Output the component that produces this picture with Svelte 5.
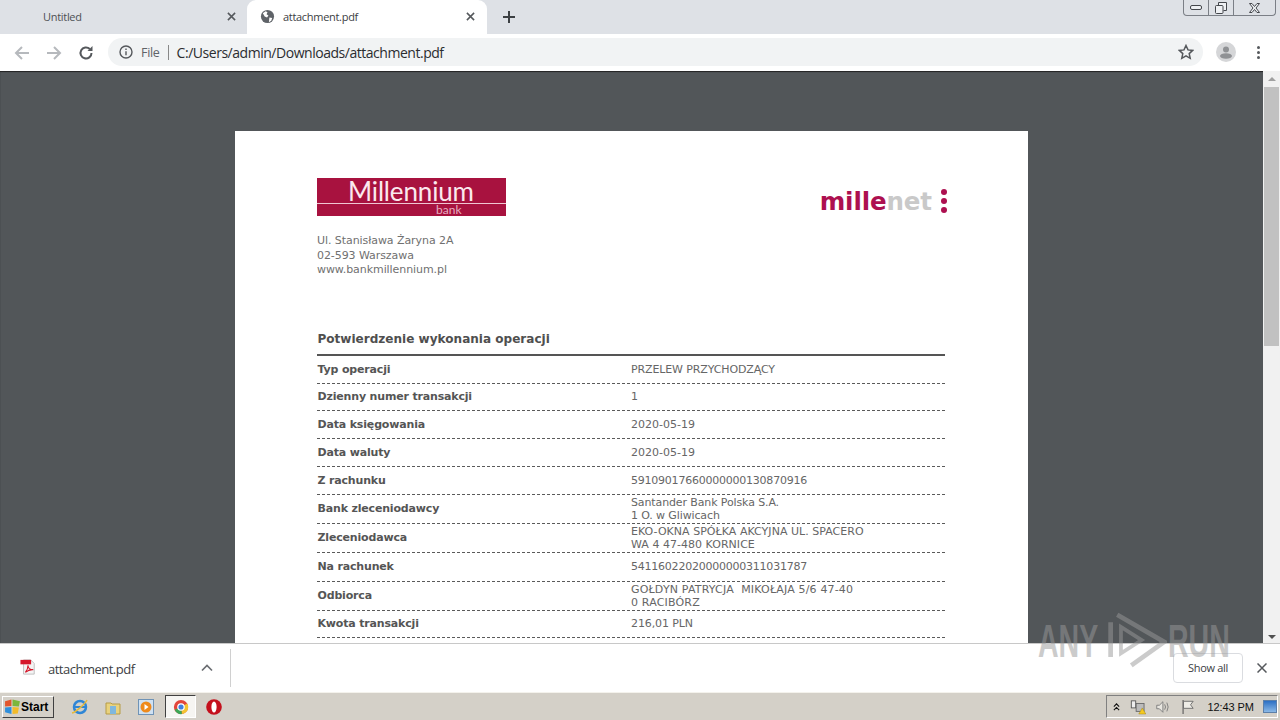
<script>
  const rows = [
    { h: 28, k: 'Typ operacji', v: ['PRZELEW PRZYCHODZĄCY'], c: 'tight' },
    { h: 27, k: 'Dzienny numer transakcji', v: ['1'], c: '' },
    { h: 28, k: 'Data księgowania', v: ['2020-05-19'], c: '' },
    { h: 28, k: 'Data waluty', v: ['2020-05-19'], c: '' },
    { h: 28, k: 'Z rachunku', v: ['59109017660000000130870916'], c: 'num' },
    { h: 29, k: 'Bank zleceniodawcy', v: ['Santander Bank Polska S.A.', '1 O. w Gliwicach'], c: 'tight' },
    { h: 29, k: 'Zleceniodawca', v: ['EKO-OKNA SPÓŁKA AKCYJNA UL. SPACERO', 'WA 4 47-480 KORNICE'], c: 'wide' },
    { h: 29, k: 'Na rachunek', v: ['54116022020000000311031787'], c: 'num' },
    { h: 29, k: 'Odbiorca', v: ['GOŁDYN PATRYCJA  MIKOŁAJA 5/6 47-40', '0 RACIBÓRZ'], c: 'wider' },
    { h: 27, k: 'Kwota transakcji', v: ['216,01 PLN'], c: 'tight' }
  ];
</script>

<div class="screen">
  <header class="tabstrip">
    <div class="tab inactive">
      <span class="tab-title">Untitled</span>
      <svg class="close" viewBox="0 0 10 10"><path d="M1 1l8 8M9 1l-8 8" /></svg>
    </div>
    <div class="tab active">
      <svg class="globe" viewBox="0 0 16 16">
        <circle cx="8" cy="8" r="7" fill="#5f6368" />
        <path d="M3 4.500l3-2 2 1-1 2 2 1.500-1.500 2-2.500-1zM10 9l3 .5-1 3-2.500 1.500z" fill="#fff" />
      </svg>
      <span class="tab-title">attachment.pdf</span>
      <svg class="close" viewBox="0 0 10 10"><path d="M1 1l8 8M9 1l-8 8" /></svg>
    </div>
    <svg class="plus" viewBox="0 0 12 12"><path d="M6 0v12M0 6h12" /></svg>
    <div class="winbtns">
      <span class="wb"><svg viewBox="0 0 12 6" width="12" height="6"><rect x="0.500" y="0.500" width="11" height="4" rx="1.500" /></svg></span>
      <span class="wb"><svg viewBox="0 0 12 12" width="12" height="12"><path d="M3.500 3V.5h8v8H8.500" /><rect x="0.500" y="3.500" width="7.500" height="8" rx="1" /></svg></span>
      <span class="wb wide-btn"><svg viewBox="0 0 12 10" width="13" height="10"><path d="M1 .5h2.500L6 3.500 8.500.5H11L7.500 5 11 9.500H8.500L6 6.500 3.500 9.500H1L4.500 5z" /></svg></span>
    </div>
  </header>

  <nav class="toolbar">
    <svg class="nav dim" viewBox="0 0 16 16"><path d="M15 8H2M8 2L2 8l6 6" /></svg>
    <svg class="nav dim" viewBox="0 0 16 16"><path d="M1 8h13M8 2l6 6-6 6" /></svg>
    <svg class="nav reload" viewBox="0 0 16 16"><path d="M13.500 8a5.500 5.500 0 1 1-1.700-4" /><path class="solid" d="M14.500 1v5h-5z" /></svg>
    <div class="omnibox">
      <svg class="info" viewBox="0 0 14 14"><circle cx="7" cy="7" r="6" /><path d="M7 6.200v4M7 3.500v1.500" /></svg>
      <span class="file">File</span>
      <span class="sep"></span>
      <span class="url">C:/Users/admin/Downloads/attachment.pdf</span>
      <svg class="star" viewBox="0 0 16 16"><path d="M8 1.500l2 4.400 4.700.5-3.500 3.200 1 4.700L8 11.900l-4.200 2.400 1-4.700L1.300 6.400 6 5.900z" /></svg>
    </div>
    <svg class="avatar" viewBox="0 0 20 20">
      <circle cx="10" cy="10" r="10" fill="#d5d6d8" />
      <circle cx="10" cy="7.500" r="3" fill="#8f9194" />
      <ellipse cx="10" cy="14" rx="6" ry="2.800" fill="#8f9194" />
    </svg>
    <div class="kebab"><i></i><i></i><i></i></div>
  </nav>

  <main class="viewer">
    <div class="canvas">
      <article class="page">
        <div class="brand">
          <div class="mlogo">
            <span class="mname">Millennium</span>
            <span class="mline"></span>
            <span class="mbank">bank</span>
          </div>
          <div class="millenet">
            <span class="mille">mille</span><span class="net">net</span>
            <span class="dots"><i></i><i></i><i></i></span>
          </div>
        </div>
        <address>
          <div>Ul. Stanisława Żaryna 2A</div>
          <div>02-593 Warszawa</div>
          <div>www.bankmillennium.pl</div>
        </address>
        <h1>Potwierdzenie wykonania operacji</h1>
        <div class="table">
          {#each rows as r}
            <div class="row" style="height:{r.h}px">
              <div class="key">{r.k}</div>
              <div class="val {r.c}">{#each r.v as line}<div>{line}</div>{/each}</div>
            </div>
          {/each}
        </div>
      </article>
    </div>
    <div class="scrollbar">
      <span class="arrow up"></span>
      <div class="track"><div class="thumb"></div></div>
      <span class="arrow down"></span>
    </div>
  </main>

  <section class="downloads">
    <div class="dl-item">
      <svg class="pdf" viewBox="0 0 18 18">
        <path d="M4 1h8l4 4v12H4z" fill="#f4f4f4" stroke="#bbb" />
        <rect x="0.500" y="1" width="12" height="5" fill="#d5182b" />
        <path d="M6 15c3-3 3-7 3-8 0 3 2 5 6 5-3-.3-6 .5-9 3z" fill="none" stroke="#d5182b" stroke-width="1.200" />
      </svg>
      <span class="dl-name">attachment.pdf</span>
      <svg class="chev" viewBox="0 0 12 8"><path d="M1 6.500l5-5 5 5" /></svg>
    </div>
    <span class="dl-sep"></span>
    <span class="grow"></span>
    <button class="showall">Show all</button>
    <svg class="dl-close" viewBox="0 0 10 10"><path d="M.5.5l9 9M9.500.5l-9 9" /></svg>
  </section>

  <footer class="taskbar">
    <button class="start">
      <svg viewBox="0 0 16 16" width="17" height="17">
        <path d="M1 3l6-1.500V7.500L1 8z" fill="#e2562c" />
        <path d="M8 1.500L15 3l-1 5-6-.5z" fill="#7cb63c" />
        <path d="M1 9l6-.5V15l-6-1.500z" fill="#2f8fdb" />
        <path d="M8 8.500l6 .5-1 5.500-5 .5z" fill="#f2bb2a" />
      </svg>
      <span>Start</span>
    </button>
    <div class="quick">
      <svg viewBox="0 0 18 18" width="18" height="18">
        <circle cx="9" cy="9" r="6" fill="none" stroke="#2f86d6" stroke-width="2.500" />
        <path d="M3 9h12" stroke="#2f86d6" stroke-width="2" />
        <path d="M1 15C5 14 14 6 16 2" fill="none" stroke="#e6b93a" stroke-width="1.500" />
      </svg>
      <svg viewBox="0 0 18 18" width="18" height="18">
        <path d="M2 5h5l1 1h8v10H2z" fill="#e9d27d" stroke="#b69b47" />
        <rect x="6" y="8" width="6" height="8" fill="#7fb7dd" />
      </svg>
      <svg viewBox="0 0 18 18" width="18" height="18">
        <rect x="1.500" y="1.500" width="15" height="15" fill="#cfe1f2" stroke="#6f93b6" />
        <circle cx="9" cy="9" r="5.500" fill="#ee8a1c" />
        <path d="M7.500 6l4 3-4 3z" fill="#fff" />
      </svg>
      <span class="active-app">
        <svg viewBox="0 0 18 18" width="16" height="16">
          <circle cx="9" cy="9" r="8" fill="#e2453a" />
          <path d="M9 9L16 5a8 8 0 0 1-6 12z" fill="#f3c331" />
          <path d="M9 9l1 8a8 8 0 0 1-8-5z" fill="#3aa655" />
          <circle cx="9" cy="9" r="3.600" fill="#3f7fe0" stroke="#fff" stroke-width="1.400" />
        </svg>
      </span>
      <svg viewBox="0 0 18 18" width="18" height="18">
        <circle cx="9" cy="9" r="7.800" fill="#c4101c" />
        <ellipse cx="9" cy="9" rx="2.600" ry="5.500" fill="#fff" />
      </svg>
    </div>
    <span class="grow"></span>
    <div class="tray">
      <svg viewBox="0 0 8 10" width="8" height="10"><path d="M1 4.500l3-3 3 3M1 8.500l3-3 3 3" fill="none" stroke="#111" stroke-width="1.300" /></svg>
      <svg viewBox="0 0 18 18" width="18" height="18">
        <rect x="1.500" y="2" width="5" height="8" fill="#eee" stroke="#555" />
        <rect x="7" y="5" width="9" height="9" fill="#bbb" stroke="#666" />
        <path d="M10 17l4-7 4 7z" fill="#f5c91f" stroke="#9a7d0e" stroke-width="0.500" />
      </svg>
      <svg viewBox="0 0 18 18" width="18" height="18">
        <path d="M2 7h3l4-4v12l-4-4H2z" fill="#e8e6e0" stroke="#777" />
        <path d="M11 6q2 3 0 6M13.500 4q3 5 0 10" fill="none" stroke="#777" />
      </svg>
      <svg viewBox="0 0 18 18" width="18" height="18">
        <path d="M3.500 1v16" stroke="#555" stroke-width="1.200" />
        <path d="M4 2.500h11l-3 4 3 4H4z" fill="#eeece6" stroke="#666" />
      </svg>
      <span class="clock">12:43 PM</span>
      <span class="showdesk"></span>
    </div>
  </footer>

  <div class="watermark" aria-hidden="true">
    <span class="wm-any">ANY</span>
    <svg class="wm-logo" viewBox="0 0 66 66" width="62" height="62">
      <path d="M6 13v37M13 5l50 29-35 25" fill="none" stroke="#999" stroke-width="5" />
      <path d="M17 18v28l22-14z" fill="none" stroke="#999" stroke-width="4" />
    </svg>
    <span class="wm-run">RUN</span>
  </div>
</div>

<style>
  :global(body) { margin: 0; }
  .screen {
    width: 1280px; height: 720px; position: relative; overflow: hidden;
    display: flex; flex-direction: column;
    font-family: "Open Sans", "Noto Sans", sans-serif; color: #3c4043; background: #fff;
  }
  .tabstrip { height: 34px; background: #dee1e6; display: flex; align-items: flex-end; flex: none; position: relative; }
  .tab { height: 34px; width: 240px; box-sizing: border-box; display: flex; align-items: center; font-size: 11px; letter-spacing: -0.3px; padding-bottom: 1px; }
  .inactive { width: 247px; padding-left: 43px; padding-right: 11px; color: #4d5054; }
  .active { background: #fff; border-radius: 9px 9px 0 0; padding-left: 13px; padding-right: 12px; color: #3c4043; }
  .tab-title { flex: 1; }
  .close { width: 9px; height: 9px; fill: none; stroke: #55585c; stroke-width: 1.700; }
  .globe { width: 15px; height: 15px; margin-right: 8px; }
  .plus { width: 12px; height: 12px; margin: 0 0 11px 16px; fill: none; stroke: #3c4043; stroke-width: 2; }
  .winbtns {
    position: absolute; right: 4px; top: 0; height: 16px; width: 93px; box-sizing: border-box;
    display: flex; border: 1px solid #7b7f86; border-top: 0; border-radius: 0 0 4px 4px;
  }
  .wb { width: 25px; flex: none; box-sizing: border-box; display: flex; align-items: center; justify-content: center; border-right: 1px solid #7b7f86; }
  .wide-btn { width: auto; flex: 1; border-right: 0; }
  .wb svg { fill: #eef0f3; stroke: #44474c; stroke-width: 1; }
  .toolbar { height: 37px; background: #fff; display: flex; align-items: center; flex: none; padding: 0 0 0 14px; box-sizing: border-box; }
  .nav { width: 16px; height: 16px; margin-right: 16px; fill: none; stroke-width: 2; }
  .dim { stroke: #b6b9bd; }
  .reload { stroke: #55585c; margin-right: 14px; }
  .reload .solid { fill: #55585c; stroke: none; }
  .omnibox {
    width: 1095px; height: 28px; margin: -1px 0 0 0; border-radius: 14px; background: #f1f3f4;
    display: flex; align-items: center; padding: 0 9px 0 11px; box-sizing: border-box;
  }
  .info { width: 14px; height: 14px; fill: none; stroke: #55585c; stroke-width: 1.400; flex: none; }
  .file { font-size: 12.5px; color: #5f6368; margin-left: 8px; letter-spacing: -0.3px; }
  .sep { width: 1px; height: 15px; background: #888; margin: 0 8px; }
  .url { flex: 1; font-size: 14px; letter-spacing: -0.47px; color: #2b2d30; }
  .star { width: 16px; height: 16px; fill: none; stroke: #55585c; stroke-width: 1.500; }
  .avatar { width: 20px; height: 20px; margin: -1px 0 0 13px; flex: none; }
  .kebab { display: flex; flex-direction: column; gap: 2px; margin: -1px 0 0 21px; }
  .kebab i { display: block; width: 3px; height: 3px; border-radius: 50%; background: #55585c; }

  .viewer { height: 572px; display: flex; flex: none; background: #525659; box-shadow: inset 0 1px 1px #222; }
  .canvas { flex: 1; overflow: hidden; padding: 60px 0 0 235px; }
  .page { width: 793px; height: 700px; box-sizing: border-box; background: #fff; padding: 47px 82px 0 82px; font-family: "DejaVu Sans", Verdana, sans-serif; color: #5e5e5e; }
  .brand { display: flex; justify-content: space-between; height: 56px; }
  .mlogo { width: 189px; height: 38px; background: #a8123f; position: relative; color: #fbe9ee; font-family: Lato, "Open Sans", sans-serif; }
  .mname { position: absolute; left: 31px; top: 2px; font-size: 26px; font-weight: 400; letter-spacing: -0.15px; line-height: 22px; }
  .mline { position: absolute; left: 0; right: 0; top: 25px; height: 1px; background: #f0c6d2; }
  .mbank { position: absolute; left: 119px; top: 26px; font-size: 12px; line-height: 12px; color: #e7aec1; }
  .millenet { display: flex; align-items: center; height: 46px; font-family: "DejaVu Sans", sans-serif; font-weight: 700; font-size: 24.5px; letter-spacing: -0.1px; margin-right: -1px; }
  .mille { color: #ad1050; }
  .net { color: #c9c9c9; }
  .dots { display: flex; flex-direction: column; gap: 3.300px; margin-left: 9px; }
  .dots i { display: block; width: 6px; height: 6px; border-radius: 50%; background: #ad1050; }
  address { font-style: normal; font-size: 11px; line-height: 14.500px; letter-spacing: -0.07px; color: #707070; }
  h1 { margin: 53px 0 0; font-size: 12.050px; line-height: 16px; font-weight: 700; color: #4f4f4f; padding-left: 0.500px; }
  .table { margin-top: 7px; width: 628px; border-top: 2px solid #555; }
  .row { display: flex; align-items: center; box-sizing: border-box; border-bottom: 1px dashed #5a5a5a; font-size: 11px; line-height: 13px; }
  .key { width: 314px; font-weight: 700; color: #555; flex: none; letter-spacing: -0.17px; padding-left: 0.500px; box-sizing: border-box; }
  .val { color: #666; }
  .val div { white-space: pre; }
  .tight { letter-spacing: -0.12px; }
  .num { letter-spacing: -0.23px; }
  .wide { letter-spacing: 0.03px; }
  .wider { letter-spacing: 0.17px; }

  .scrollbar { width: 17px; background: #f1f1f1; display: flex; flex-direction: column; align-items: center; flex: none; }
  .arrow { width: 0; height: 0; border-left: 4px solid transparent; border-right: 4px solid transparent; flex: none; }
  .up { border-bottom: 4px solid #a0a0a0; margin: 6px 0 6px; }
  .down { border-top: 4px solid #505050; margin: 6px 0 4px; }
  .track { flex: 1; width: 100%; }
  .thumb { width: 15px; height: 259px; margin: 0 1px; background: #c1c1c1; }

  .downloads { height: 49px; flex: none; background: #fff; display: flex; align-items: center; border-top: 1px solid #c8c8c8; box-sizing: border-box; }
  .dl-item { display: flex; align-items: center; padding-left: 20px; width: 230px; box-sizing: border-box; padding-top: 2px; }
  .pdf { width: 16px; height: 16px; flex: none; margin-top: -4px; }
  .dl-name { font-size: 13px; color: #3c4043; margin-left: 12px; letter-spacing: -0.5px; flex: 1; }
  .chev { width: 12px; height: 8px; fill: none; stroke: #6b6e72; stroke-width: 1.700; margin-right: 17px; margin-top: -2px; }
  .dl-sep { width: 1px; height: 38px; background: #d0d0d0; }
  .grow { flex: 1; }
  .showall { width: 70px; height: 30px; box-sizing: border-box; border: 1px solid #dadce0; border-radius: 4px; background: #fff; font: 11px "Open Sans", sans-serif; letter-spacing: -0.3px; color: #3c4043; padding: 0 0 1px; margin-top: -1px; }
  .dl-close { width: 10px; height: 10px; margin: -1px 13px 0 14px; fill: none; stroke: #55585c; stroke-width: 1.500; }

  .taskbar { height: 28px; flex: none; background: #d4d0c8; display: flex; align-items: center; border-top: 1px solid #f4f2ec; box-sizing: border-box; }
  .start { width: 52px; height: 22px; margin-left: 2px; padding: 0 0 0 1px; display: flex; align-items: center; gap: 0; background: #d4d0c8; border: 1px solid; border-color: #fff #404040 #404040 #fff; font: 700 12px "Liberation Sans", sans-serif; color: #000; box-sizing: border-box; }
  .quick { display: flex; align-items: center; gap: 15px; margin-left: 17px; }
  .active-app { width: 31px; height: 23px; margin: 0 -6px 0 -5px; background: #f6f5f2; border: 1px solid; border-color: #404040 #fff #fff #404040; display: flex; align-items: center; justify-content: center; box-sizing: border-box; }
  .tray { height: 23px; width: 172px; margin-right: 2px; box-sizing: border-box; border: 1px solid; border-color: #808080 #fff #fff #808080; display: flex; align-items: center; padding-left: 5px; gap: 9px; }
  .tray svg:first-child { margin-left: 1px; margin-right: 1px; }
  .clock { font: 11px "Liberation Sans", sans-serif; color: #111; margin-left: 3px; white-space: nowrap; letter-spacing: -0.1px; }
  .showdesk { width: 16px; height: 13px; background: linear-gradient(#2b6fc4, #8ab8e6); border: 1px solid #5c7fa8; box-sizing: border-box; }

  .watermark { position: absolute; left: 1038px; top: 610px; height: 62px; opacity: 0.5; color: #999; font: 700 46px "Liberation Sans", sans-serif; pointer-events: none; }
  .wm-any, .wm-run { position: absolute; top: 4px; transform-origin: left center; line-height: 54px; transform: scaleX(0.62); }
  .wm-any { left: 0; }
  .wm-logo { position: absolute; left: 67px; top: 0; }
  .wm-run { left: 130px; }
</style>
